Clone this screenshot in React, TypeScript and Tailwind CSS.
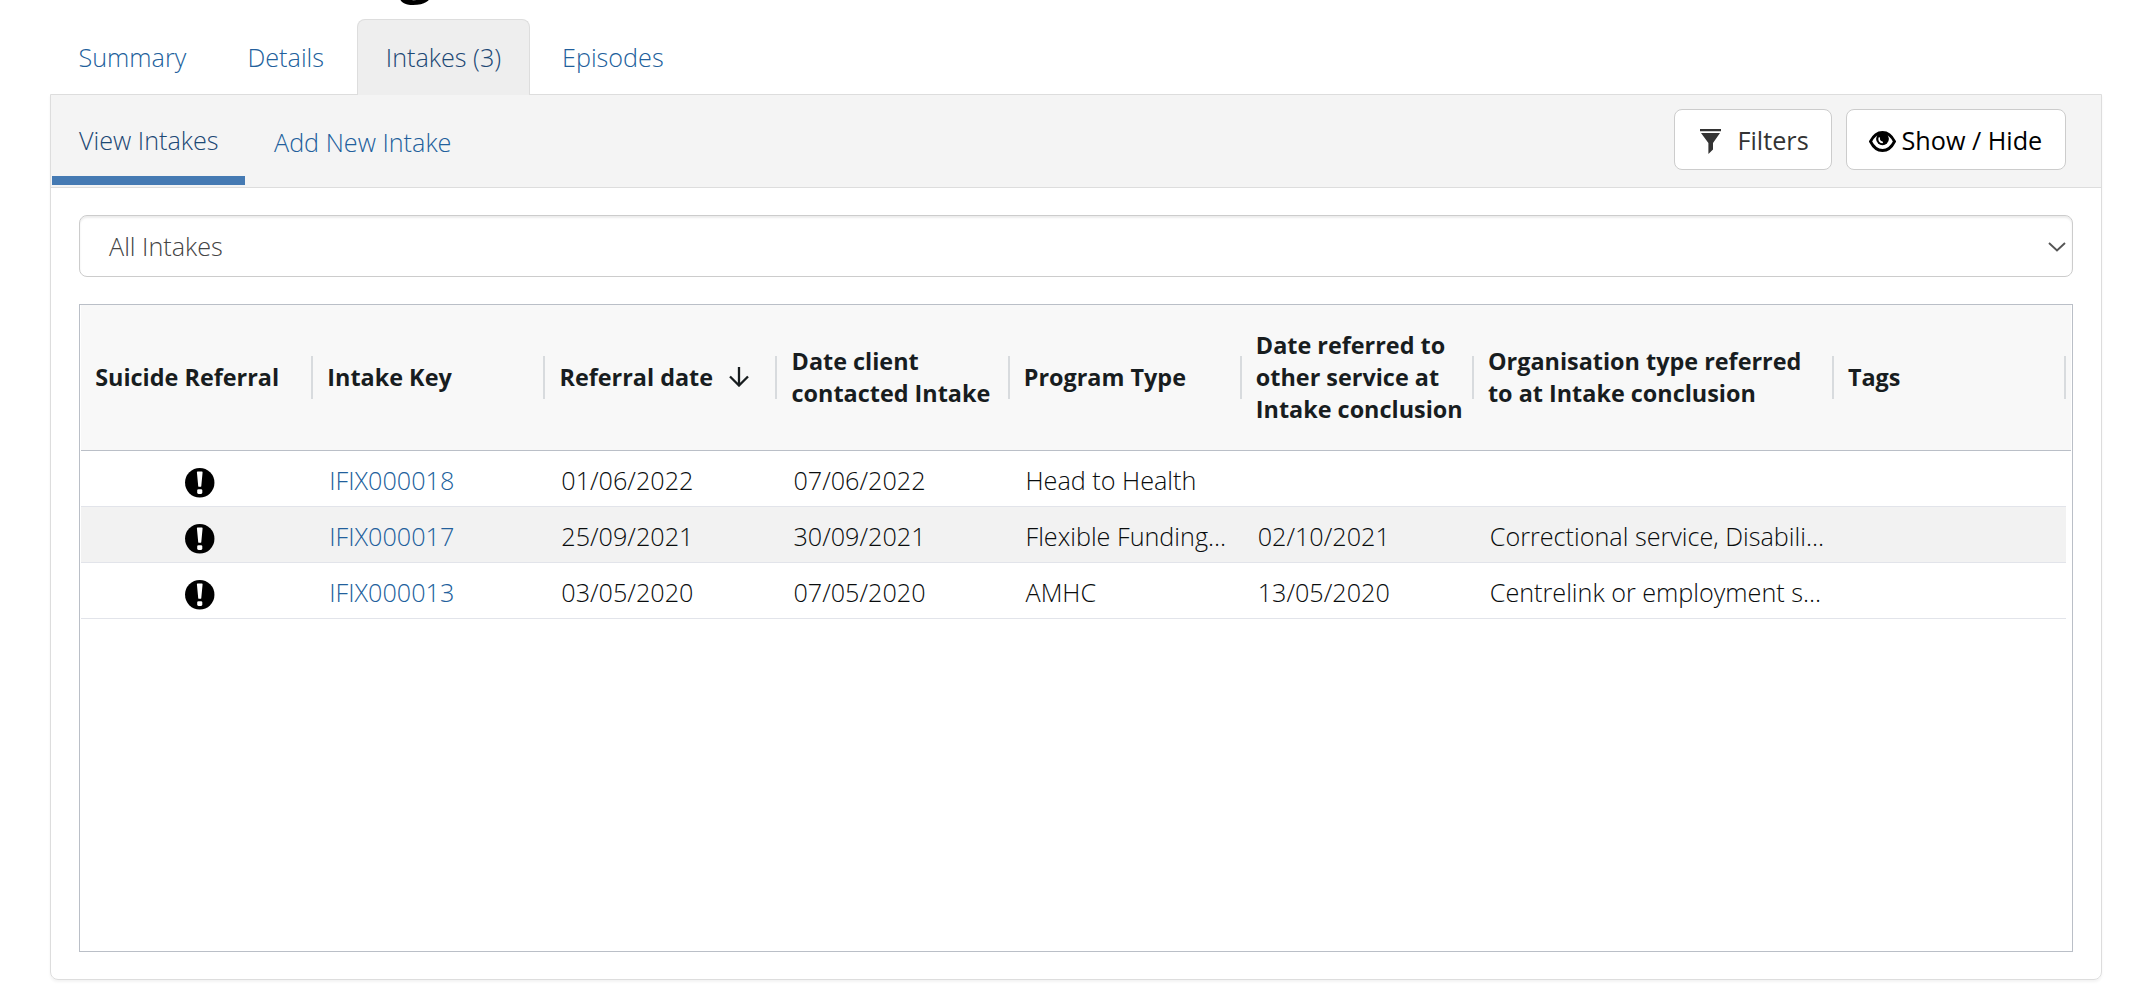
import type { ReactNode } from "react";

const GRID = "grid grid-cols-[repeat(6,232.14px)_360px_232.14px]";

const headers: { label: ReactNode; sorted?: boolean }[] = [
  { label: "Suicide Referral" },
  { label: "Intake Key" },
  { label: "Referral date", sorted: true },
  { label: <>Date client<br />contacted Intake</> },
  { label: "Program Type" },
  { label: <>Date referred to<br />other service at<br />Intake conclusion</> },
  { label: <>Organisation type referred<br />to at Intake conclusion</> },
  { label: "Tags" },
];

const rows = [
  ["IFIX000018", "01/06/2022", "07/06/2022", "Head to Health", "", "", ""],
  ["IFIX000017", "25/09/2021", "30/09/2021", "Flexible Funding…", "02/10/2021", "Correctional service, Disabili…", ""],
  ["IFIX000013", "03/05/2020", "07/05/2020", "AMHC", "13/05/2020", "Centrelink or employment s…", ""],
];

function FilterIcon() {
  return (
    <svg className="mt-[4px] h-[25px] w-[21px]" viewBox="0 0 21 25" fill="#333">
      <path d="M0 0h21v2.2H0zM1 4h19l-7 10v6.6L8.4 25V14z" />
    </svg>
  );
}

function EyeIcon() {
  return (
    <svg className="mt-[4px] h-[21px] w-[27px]" viewBox="0 0 27 21">
      <path d="M1.5 10.5C4.5 4.5 8.5 1.5 13.5 1.5s9 3 12 9c-3 6-7 9-12 9s-9-3-12-9z" fill="#fff" stroke="#000" strokeWidth="2.8" />
      <circle cx="13.5" cy="7.8" r="6.4" />
      <path d="M10.2 7c-.3 2.300.9 4 3 4.400" fill="none" stroke="#fff" strokeWidth="1.6" strokeLinecap="round" />
    </svg>
  );
}

function AlertIcon() {
  return (
    <svg className="h-[29.5px] w-[29.5px]" viewBox="0 0 29.5 29.5">
      <circle cx="14.75" cy="14.75" r="14.7" />
      <path d="M12.6 3.500h4.300q.7 0 .7.8l-1.300 13.600q-.1.900-.8.900h-1.500q-.7 0-.8-.900L11.900 4.300q0-.8.7-.8z" fill="#fff" />
      <rect x="12.2" y="21.200" width="5.100" height="4.700" rx="1.300" fill="#fff" />
    </svg>
  );
}

function SortArrow() {
  return (
    <svg className="ml-[15.5px] h-5 w-5" viewBox="0 0 20 20" fill="none" stroke="#181d1f" strokeWidth="2.3">
      <path d="M10 0v18M1 9.500l9 9 9-9" />
    </svg>
  );
}

export default function App() {
  return (
    <div className="h-[1002px] w-[2152px] overflow-hidden bg-white font-['Open_Sans',sans-serif] text-[25.2px] font-light">
      <div className="flex h-[19px] items-end overflow-hidden pl-[399px]">
        <span className="h-[81px] text-[60px] leading-[60px] font-semibold text-black">g</span>
      </div>

      <nav className="relative z-10 ml-[50px] flex h-[76px] text-[#225f9c]">
        <a className="flex w-[169px] items-center pt-[2px] pl-[28.5px]">Summary</a>
        <a className="flex w-[138px] items-center pt-[2px] pl-[28.5px]">Details</a>
        <a className="flex w-[173px] items-center justify-center rounded-t-lg border border-b-0 border-[#ddd] bg-[#eee] text-[#1c4874]">Intakes (3)</a>
        <a className="flex items-center pt-[2px] pl-[32px]">Episodes</a>
      </nav>

      <div className="-mt-px ml-[50px] h-[886px] w-[2052px] rounded-b-lg border border-[#ddd] shadow-[0_2px_3px_rgba(0,0,0,0.05)]">
        <div className="flex h-[93px] border-b border-[#ddd] bg-[#f4f4f4] pr-[35px]">
          <a className="ml-px flex h-[90px] w-[193px] items-center border-b-[9px] border-[#457ab3] pt-[10px] pl-[27px] text-[#1c4874]">View Intakes</a>
          <a className="flex items-center pt-[4px] pl-[29px] text-[#225f9c]">Add New Intake</a>
          <div className="mt-[14px] ml-auto flex h-[61px] gap-[14px] font-normal">
            <button className="flex w-[158px] items-center rounded-lg border border-[#ccc] bg-white pl-[25px] text-[#333]">
              <FilterIcon />
              <span className="mt-[2px] ml-[16.5px]">Filters</span>
            </button>
            <button className="flex w-[220px] items-center rounded-lg border border-[#ccc] bg-white pl-[22px] text-black">
              <EyeIcon />
              <span className="mt-[2px] ml-[5.5px]">Show / Hide</span>
            </button>
          </div>
        </div>

        <div className="mt-[27px] ml-[28px] flex h-[62px] w-[1994px] items-center justify-between rounded-lg border border-[#ccc] pr-[6px] pl-[29px] text-[#444] shadow-[inset_0_2px_2px_rgba(0,0,0,0.075)]">
          <span className="pt-[2px]">All Intakes</span>
          <svg className="mt-px h-[10px] w-[18px]" viewBox="0 0 18 10" fill="none" stroke="#555" strokeWidth="1.9">
            <path d="M1 1l8 7.500L17 1" />
          </svg>
        </div>

        <div className="mt-[27px] ml-[28px] h-[648px] w-[1994px] border border-[#babfc7] px-px">
          <div className={`${GRID} h-[146px] border-b border-[#babfc7] bg-[#f8f8f8] text-[23.4px] leading-8 font-bold whitespace-nowrap text-[#181d1f]`}>
            {headers.map((h, i) => (
              <div key={i} className="flex items-center justify-between pl-[14.2px]">
                <span className="flex items-center pb-[2px]">
                  {h.label}
                  {h.sorted && <SortArrow />}
                </span>
                <span className="-ml-2 h-[43px] w-[2px] bg-[#d8dbde]" />
              </div>
            ))}
          </div>
          {rows.map((row, r) => (
            <div
              key={r}
              className={`${GRID} h-[56px] w-[1985px] border-b border-[#e2e4ea] whitespace-nowrap text-[#090c0d] ${r % 2 ? "bg-[#f2f2f2]" : "bg-white"}`}
            >
              <div className="flex items-center justify-center pt-[9px] pl-[6px]">
                <AlertIcon />
              </div>
              {row.map((cell, c) => (
                <div key={c} className={`flex items-center pt-[5px] pl-[16px] ${c === 0 ? "text-[#225f9c]" : ""}`}>{cell}</div>
              ))}
            </div>
          ))}
        </div>
      </div>
    </div>
  );
}
